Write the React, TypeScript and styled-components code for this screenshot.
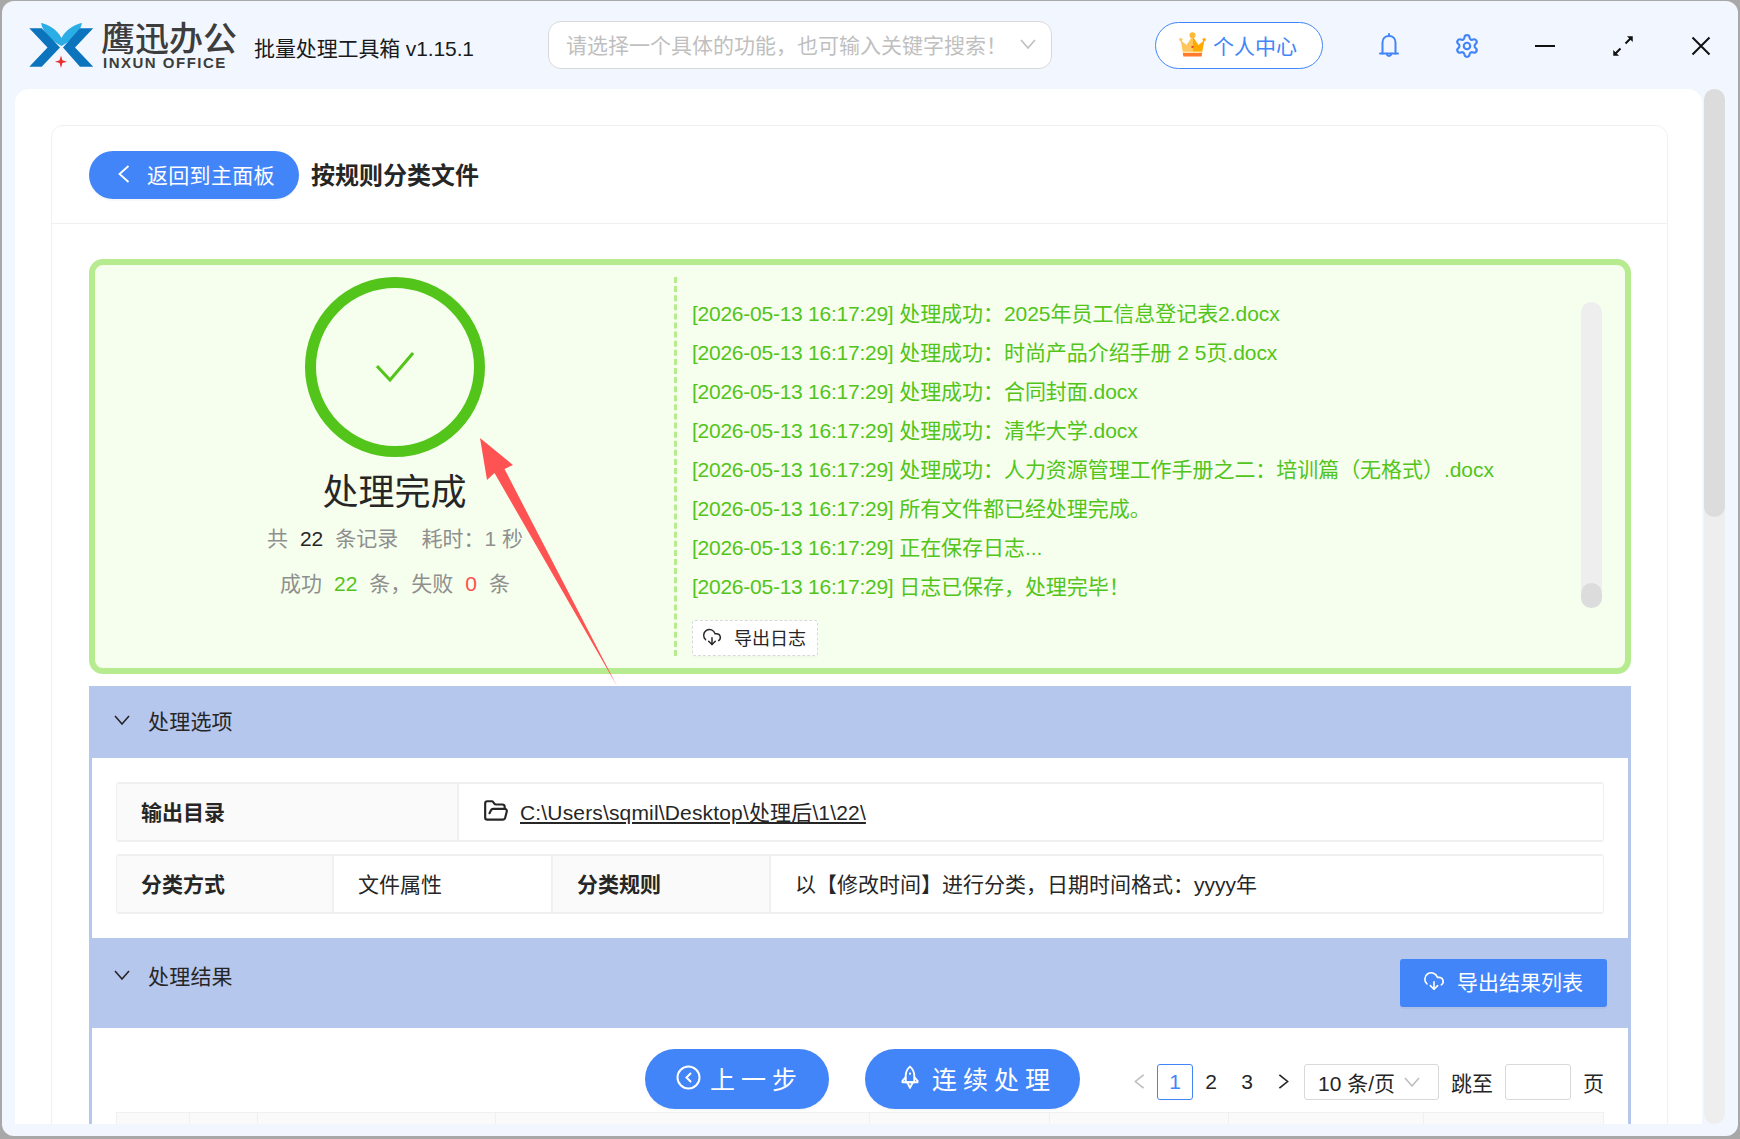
import React from "react";
import styled, { createGlobalStyle } from "styled-components";
import { CloudDownload, FolderOpen, Settings } from "lucide-react";

const BLUE = "#4285f8";
const BAND = "#b6c7ee";
const GREEN = "#52c41a";
const LINE = "#f0f0f0";

const GlobalStyle = createGlobalStyle`
  html, body {
    margin: 0;
    padding: 0;
    overflow: hidden;
  }
  * {
    box-sizing: border-box;
  }
  body {
    font-family: "Liberation Sans", "Noto Sans CJK SC", sans-serif;
    font-size: 21px;
    color: #262626;
  }
`;

const Desktop = styled.div`
  position: relative;
  width: 1740px;
  height: 1139px;
  overflow: hidden;
  background: #a8a8a8;
  padding: 1px 2px 3px 2px;
`;

const Win = styled.div`
  display: flex;
  flex-direction: column;
  height: 100%;
  background: #f2f7ff;
  border-radius: 12px;
  overflow: hidden;
`;

const TitleBar = styled.header`
  display: flex;
  align-items: center;
  flex: none;
  height: 88px;
  padding-left: 27px;
`;

const LogoMark = styled.svg`
  flex: none;
  width: 64px;
  height: 45px;
  margin-top: 1px;
`;

const Brand = styled.div`
  display: flex;
  flex-direction: column;
  flex: none;
  width: 137px;
  margin-left: 8px;
  margin-top: 1px;
`;

const BrandName = styled.div`
  font-size: 34px;
  line-height: 33px;
  font-weight: 500;
  color: #3d3d3d;
  white-space: nowrap;
`;

const BrandLatin = styled.div`
  padding-left: 2px;
  font-size: 15px;
  line-height: 13px;
  font-weight: 700;
  letter-spacing: 1.5px;
  color: #3d3d3d;
  white-space: nowrap;
`;

const AppTitle = styled.div`
  flex: none;
  width: 294px;
  margin-left: 16px;
  margin-top: 3px;
  letter-spacing: -0.12px;
  color: #1a1a1a;
  white-space: nowrap;
`;

const SearchBox = styled.div`
  display: flex;
  align-items: center;
  justify-content: space-between;
  flex: none;
  width: 504px;
  height: 48px;
  padding: 0 15px 3px 17px;
  background: #fff;
  border: 1px solid #d9d9d9;
  border-radius: 13px;
  color: #bfbfbf;
  white-space: nowrap;
`;

const ProfileButton = styled.div`
  display: flex;
  align-items: center;
  flex: none;
  width: 168px;
  height: 47px;
  margin-left: 103px;
  margin-top: 1px;
  padding: 0 0 2px 23px;
  gap: 7px;
  background: #fff;
  border: 1px solid ${BLUE};
  border-radius: 24px;
  color: ${BLUE};
`;

const IconCell = styled.div`
  display: flex;
  align-items: center;
  justify-content: center;
  flex: none;
  width: 78px;
  height: 30px;
  margin-top: 1px;
  color: ${BLUE};
`;

const IconGroup = styled.div`
  display: flex;
  flex: none;
  margin-left: 27px;
`;

const Body = styled.div`
  display: flex;
  flex: 1;
  min-height: 0;
  padding: 0 13px 12px 13px;
  gap: 2px;
`;

const Panel = styled.main`
  flex: 1;
  min-width: 0;
  background: #fff;
  border-radius: 14px 14px 0 0;
  overflow: hidden;
  padding: 36px 34px 0 36px;
`;

const PageScroll = styled.div`
  flex: none;
  width: 21px;
  background: #eeeeee;
  border-radius: 11px;
`;

const PageThumb = styled.div`
  height: 428px;
  background: #dcdcdc;
  border-radius: 11px;
`;

const Card = styled.section`
  border: 1px solid ${LINE};
  border-radius: 12px 12px 0 0;
  height: 1100px;
`;

const CardHead = styled.div`
  display: flex;
  align-items: center;
  height: 98px;
  padding-left: 37px;
  border-bottom: 1px solid ${LINE};
`;

const BackButton = styled.div`
  display: flex;
  align-items: center;
  width: 210px;
  height: 48px;
  padding: 0 0 2px 29px;
  gap: 17px;
  background: ${BLUE};
  border-radius: 24px;
  box-shadow: 0 2px 0 rgba(0, 0, 0, 0.03);
  letter-spacing: 0.3px;
  color: #fff;
`;

const PageTitle = styled.h1`
  margin: 0 0 2px 12px;
  font-size: 24px;
  font-weight: 700;
  color: #262626;
`;

const CardBody = styled.div`
  padding: 35px 36px 0 37px;
`;

const ResultBox = styled.div`
  display: flex;
  height: 415px;
  background: #f6ffed;
  border: 6px solid #b7eb8f;
  border-radius: 14px;
`;

const Summary = styled.div`
  display: flex;
  flex-direction: column;
  align-items: center;
  flex: none;
  width: 579px;
  padding: 12px 0 0 20px;
`;

const Ring = styled.div`
  display: flex;
  align-items: center;
  justify-content: center;
  width: 180px;
  height: 180px;
  border: 11px solid ${GREEN};
  border-radius: 50%;
`;

const DoneTitle = styled.div`
  margin-top: 12px;
  font-size: 36px;
  line-height: 47px;
  color: #262626;
`;

const StatLine = styled.div`
  display: flex;
  height: 45px;
  line-height: 45px;
  margin-left: 1px;
  color: #8f8f8f;
  white-space: pre;
`;

const StatNum = styled.span<{ $color: string }>`
  margin: 0 12px;
  color: ${(p) => p.$color};
`;

const LogColumn = styled.div`
  display: flex;
  flex: 1;
  min-width: 0;
  height: 379px;
  margin-top: 12px;
  padding: 0 23px 0 15px;
  border-left: 3px dashed #b7eb8f;
`;

const LogMain = styled.div`
  flex: 1;
  min-width: 0;
  padding-top: 16.5px;
`;

const LogLine = styled.div`
  height: 39px;
  line-height: 39px;
  letter-spacing: -0.05px;
  color: ${GREEN};
  white-space: nowrap;
`;

const LogStamp = styled.span`
  letter-spacing: -0.25px;
`;

const LogExport = styled.div`
  display: flex;
  align-items: center;
  width: 126px;
  height: 36px;
  margin-top: 14.5px;
  padding: 0 0 2px 9px;
  gap: 12px;
  background: #fff;
  border: 1px dashed #d9d9d9;
  border-radius: 3px;
  box-shadow: 0 2px 0 rgba(0, 0, 0, 0.02);
  font-size: 18px;
  color: #262626;
`;

const LogTrack = styled.div`
  display: flex;
  align-items: flex-end;
  flex: none;
  width: 21px;
  height: 306px;
  margin-top: 25px;
  background: #eeeeee;
  border-radius: 11px;
`;

const LogThumb = styled.div`
  width: 100%;
  height: 25px;
  background: #dcdcdc;
  border-radius: 11px;
`;

const BandHead = styled.div<{ $height: number; $top?: number }>`
  display: flex;
  align-items: center;
  justify-content: space-between;
  height: ${(p) => p.$height}px;
  margin-top: ${(p) => p.$top ?? 0}px;
  padding: 0 24px 0 25px;
  background: ${BAND};
`;

const BandTitle = styled.div<{ $lift?: number }>`
  display: flex;
  align-items: center;
  gap: 18px;
  margin-bottom: ${(p) => p.$lift ?? 4}px;
  letter-spacing: 0.2px;
  color: #262626;
`;

const ExportButton = styled.div`
  display: flex;
  align-items: center;
  width: 207px;
  height: 48px;
  padding: 0 0 4px 23px;
  gap: 12px;
  background: ${BLUE};
  border-radius: 3px;
  box-shadow: 0 2px 0 rgba(0, 0, 0, 0.04);
  color: #fff;
`;

const BandBody = styled.div<{ $pad: string }>`
  padding: ${(p) => p.$pad};
  border-left: 3px solid ${BAND};
  border-right: 3px solid ${BAND};
`;

const InfoRow = styled.div<{ $cols: string; $gap?: number }>`
  display: grid;
  grid-template-columns: ${(p) => p.$cols};
  height: 60px;
  margin-top: ${(p) => p.$gap ?? 0}px;
  border: 2px solid ${LINE};
  border-left-width: 1px;
  border-right-width: 1px;
  border-radius: 3px;
`;

const InfoLabel = styled.div`
  display: flex;
  align-items: center;
  padding: 0 0 2px 24px;
  background: #fafafa;
  border-right: 2px solid ${LINE};
  font-weight: 700;
  color: #262626;
`;

const InfoValue = styled.div<{ $divider?: boolean }>`
  display: flex;
  align-items: center;
  gap: 11px;
  padding: 0 0 2px 24px;
  border-right: ${(p) => (p.$divider ? `2px solid ${LINE}` : "none")};
  color: #262626;
  white-space: nowrap;
`;

const PathLink = styled.span`
  text-decoration: underline;
  letter-spacing: 0.16px;
`;

const Toolbar = styled.div`
  display: flex;
  align-items: center;
  height: 60px;
  padding-left: 529px;
`;

const StepButton = styled.div<{ $width: number; $gap: number; $pad: number; $inner: number }>`
  display: flex;
  align-items: center;
  flex: none;
  width: ${(p) => p.$width}px;
  height: 60px;
  margin-right: ${(p) => p.$gap}px;
  padding: 0 0 3px ${(p) => p.$pad}px;
  gap: ${(p) => p.$inner}px;
  background: ${BLUE};
  border-radius: 30px;
  box-shadow: 0 2px 0 rgba(0, 0, 0, 0.03);
  color: #fff;
  font-size: 25px;
  letter-spacing: 6px;
`;

const Pager = styled.div`
  display: flex;
  align-items: center;
  flex: none;
  margin-top: 5px;
`;

const PageItem = styled.div<{ $active?: boolean; $muted?: boolean }>`
  display: flex;
  align-items: center;
  justify-content: center;
  width: 36px;
  height: 36px;
  border: 1px solid ${(p) => (p.$active ? BLUE : "transparent")};
  border-radius: 3px;
  color: ${(p) => (p.$active ? BLUE : p.$muted ? "#bfbfbf" : "#262626")};
`;

const SizeSelect = styled.div`
  display: flex;
  align-items: center;
  justify-content: space-between;
  width: 135px;
  height: 36px;
  margin-left: 3px;
  padding: 0 18px 0 13px;
  border: 1px solid #d9d9d9;
  border-radius: 3px;
  color: #bfbfbf;
`;

const SizeText = styled.span`
  color: #262626;
  white-space: nowrap;
`;

const JumpLabel = styled.span<{ $left: number }>`
  margin-left: ${(p) => p.$left}px;
  white-space: nowrap;
`;

const JumpInput = styled.div`
  width: 66px;
  height: 36px;
  margin-left: 12px;
  background: #fff;
  border: 1px solid #d9d9d9;
  border-radius: 3px;
`;

const TableHead = styled.div`
  display: grid;
  grid-template-columns: 73px 68px 238px 374px 180px 179px 195px 181px;
  height: 50px;
  margin-top: 3px;
  background: #fafafa;
  border: 1px solid ${LINE};
`;

const TableCell = styled.div`
  border-right: 1px solid ${LINE};

  &:last-child {
    border-right: none;
  }
`;

const Annotation = styled.svg`
  position: absolute;
  left: 470px;
  top: 430px;
  width: 160px;
  height: 260px;
  pointer-events: none;
`;

const Logo = () => (
  <LogoMark viewBox="0 0 64 45">
    <path d="M12 0C18 1 28 6 32.5 15C37 6 47 1 53 0C51 10 42 18 32.5 23C23 18 14 10 12 0Z" fill="#2bade6" />
    <path d="M0.3 5.3H12.7L31 24.5L12.7 43.7H0.3L18.5 24.5Z" fill="#0b74bd" />
    <path d="M64.3 5.3H51L34 24.5L51 43.7H64.3L46 24.5Z" fill="#0b74bd" />
    <path d="M32 32.5L33.4 37.3L38 38.7L33.4 40.1L32 45L30.6 40.1L26 38.7L30.6 37.3Z" fill="#e8312f" />
  </LogoMark>
);

const Crown = () => (
  <svg width="27" height="25" viewBox="0 0 27 25">
    <path d="M1.5 8L7.5 13L13.5 4V21H4Z" fill="#ffc65c" />
    <path d="M25.5 8L19.5 13L13.5 4V21H23Z" fill="#ffaa00" />
    <circle cx="13.5" cy="3.2" r="3" fill="#ffb93a" />
    <circle cx="1.8" cy="7.6" r="1.7" fill="#ffc65c" />
    <circle cx="25.2" cy="7.6" r="1.7" fill="#ffaa00" />
    <rect x="3.8" y="19.5" width="19.4" height="1.6" fill="#ffe2a8" />
    <path d="M3.8 21H23.2L22.6 24.5H4.4Z" fill="#ff7a2a" />
    <rect x="12.5" y="14" width="2" height="1.8" fill="#e0352b" />
  </svg>
);

const BellIcon = () => (
  <svg width="20" height="25" viewBox="0 0 20 25" fill="none" stroke={BLUE} strokeWidth="2" strokeLinecap="round">
    <path d="M10 1V3" />
    <path d="M3.5 20.5V9.5C3.5 5.5 6.3 3 10 3S16.5 5.5 16.5 9.5V20.5" />
    <path d="M1 20.5H19" />
    <path d="M7.8 20.8C8 23.6 12 23.6 12.2 20.8" />
  </svg>
);

const ExpandIcon = () => (
  <svg width="20" height="20" viewBox="0 0 20 20" fill="none" stroke="#111" strokeWidth="2">
    <path d="M1.5 18.5L7.5 12.5M12.5 7.5L18.5 1.5" />
    <path d="M0.5 14.5V19.5H5.5Z" fill="#111" strokeWidth="0.5" />
    <path d="M19.5 5.5V0.5H14.5Z" fill="#111" strokeWidth="0.5" />
  </svg>
);

const CloseIcon = () => (
  <svg width="20" height="20" viewBox="0 0 20 20" fill="none" stroke="#111" strokeWidth="2">
    <path d="M1.5 1.5L18.5 18.5M18.5 1.5L1.5 18.5" />
  </svg>
);

const MinIcon = () => (
  <svg width="20" height="2" viewBox="0 0 20 2">
    <rect width="20" height="2" fill="#111" />
  </svg>
);

// flat open V used by the collapse arrows and select boxes
const DownMark = () => (
  <svg width="16" height="10" viewBox="0 0 16 10" fill="none" stroke="currentColor" strokeWidth="1.6">
    <path d="M1 1L8 9L15 1" />
  </svg>
);

const SideMark = ({ w, h, flip }: { w: number; h: number; flip?: boolean }) => (
  <svg width={w} height={h} viewBox="0 0 12 18" preserveAspectRatio="none" fill="none" stroke="currentColor" strokeWidth="1.8">
    <path d={flip ? "M1.5 1L10.5 9L1.5 17" : "M10.5 1L1.5 9L10.5 17"} />
  </svg>
);

const CircleBack = () => (
  <svg width="25" height="25" viewBox="0 0 25 25" fill="none" stroke="#fff" strokeWidth="2">
    <circle cx="12.5" cy="12.5" r="11" />
    <path d="M14.5 8.5L10.5 12.5L14.5 16.5" strokeLinecap="round" />
  </svg>
);

const RocketIcon = () => (
  <svg width="18" height="25" viewBox="0 0 19 26" fill="none" stroke="#fff" strokeWidth="2" strokeLinejoin="round">
    <path d="M9.5 1.5C6.5 4 5 7 5 11V18H14V11C14 7 12.5 4 9.5 1.5Z" />
    <circle cx="9.5" cy="9" r="1.2" fill="#fff" stroke="none" />
    <path d="M5 12.5L1.5 16.5V18H17.5V16.5L14 12.5" />
    <path d="M6.5 18L9.5 24L12.5 18" />
  </svg>
);

const logs = [
  "处理成功：2025年员工信息登记表2.docx",
  "处理成功：时尚产品介绍手册 2 5页.docx",
  "处理成功：合同封面.docx",
  "处理成功：清华大学.docx",
  "处理成功：人力资源管理工作手册之二：培训篇（无格式）.docx",
  "所有文件都已经处理完成。",
  "正在保存日志...",
  "日志已保存，处理完毕！",
];

const App = () => {
  return (
    <Desktop>
      <GlobalStyle />
      <Win>
        <TitleBar>
          <Logo />
          <Brand>
            <BrandName>鹰迅办公</BrandName>
            <BrandLatin>INXUN OFFICE</BrandLatin>
          </Brand>
          <AppTitle>批量处理工具箱 v1.15.1</AppTitle>
          <SearchBox>
            请选择一个具体的功能，也可输入关键字搜索！
            <DownMark />
          </SearchBox>
          <ProfileButton>
            <Crown />
            个人中心
          </ProfileButton>
          <IconGroup>
            <IconCell>
              <BellIcon />
            </IconCell>
            <IconCell>
              <Settings size={26} strokeWidth={2} />
            </IconCell>
            <IconCell>
              <MinIcon />
            </IconCell>
            <IconCell>
              <ExpandIcon />
            </IconCell>
            <IconCell>
              <CloseIcon />
            </IconCell>
          </IconGroup>
        </TitleBar>
        <Body>
          <Panel>
            <Card>
              <CardHead>
                <BackButton>
                  <SideMark w={12} h={18} />
                  返回到主面板
                </BackButton>
                <PageTitle>按规则分类文件</PageTitle>
              </CardHead>
              <CardBody>
                <ResultBox>
                  <Summary>
                    <Ring>
                      <svg width="38" height="30" viewBox="0 0 38 30" fill="none" stroke={GREEN} strokeWidth="3">
                        <path d="M1 14L14 28L37 1" />
                      </svg>
                    </Ring>
                    <DoneTitle>处理完成</DoneTitle>
                    <StatLine>
                      共<StatNum $color="#262626">22</StatNum>条记录{"    "}耗时：1 秒
                    </StatLine>
                    <StatLine>
                      成功<StatNum $color={GREEN}>22</StatNum>条，失败<StatNum $color="#ff4d4f">0</StatNum>条
                    </StatLine>
                  </Summary>
                  <LogColumn>
                    <LogMain>
                      {logs.map((text) => (
                        <LogLine key={text}>
                          <LogStamp>[2026-05-13 16:17:29]</LogStamp> {text}
                        </LogLine>
                      ))}
                      <LogExport>
                        <CloudDownload size={20} strokeWidth={1.75} />
                        导出日志
                      </LogExport>
                    </LogMain>
                    <LogTrack>
                      <LogThumb />
                    </LogTrack>
                  </LogColumn>
                </ResultBox>

                <BandHead $height={72} $top={12}>
                  <BandTitle>
                    <DownMark />
                    处理选项
                  </BandTitle>
                </BandHead>
                <BandBody $pad="24px 24px 24px 24px">
                  <InfoRow $cols="342px 1fr">
                    <InfoLabel>输出目录</InfoLabel>
                    <InfoValue>
                      <FolderOpen size={26} strokeWidth={2} />
                      <PathLink>C:\Users\sqmil\Desktop\处理后\1\22\</PathLink>
                    </InfoValue>
                  </InfoRow>
                  <InfoRow $cols="217px 219px 218px 1fr" $gap={12}>
                    <InfoLabel>分类方式</InfoLabel>
                    <InfoValue $divider>文件属性</InfoValue>
                    <InfoLabel>分类规则</InfoLabel>
                    <InfoValue>以【修改时间】进行分类，日期时间格式：yyyy年</InfoValue>
                  </InfoRow>
                </BandBody>

                <BandHead $height={90}>
                  <BandTitle $lift={17}>
                    <DownMark />
                    处理结果
                  </BandTitle>
                  <ExportButton>
                    <CloudDownload size={22} strokeWidth={1.75} />
                    导出结果列表
                  </ExportButton>
                </BandHead>
                <BandBody $pad="21px 24px 0 24px">
                  <Toolbar>
                    <StepButton $width={184} $gap={36} $pad={31} $inner={9}>
                      <CircleBack />
                      上一步
                    </StepButton>
                    <StepButton $width={215} $gap={41} $pad={36} $inner={13}>
                      <RocketIcon />
                      连续处理
                    </StepButton>
                    <Pager>
                      <PageItem $muted>
                        <SideMark w={11} h={15} />
                      </PageItem>
                      <PageItem $active>1</PageItem>
                      <PageItem>2</PageItem>
                      <PageItem>3</PageItem>
                      <PageItem>
                        <SideMark w={11} h={15} flip />
                      </PageItem>
                      <SizeSelect>
                        <SizeText>10 条/页</SizeText>
                        <DownMark />
                      </SizeSelect>
                      <JumpLabel $left={12}>跳至</JumpLabel>
                      <JumpInput />
                      <JumpLabel $left={12}>页</JumpLabel>
                    </Pager>
                  </Toolbar>
                  <TableHead>
                    {Array.from({ length: 8 }, (_, i) => (
                      <TableCell key={i} />
                    ))}
                  </TableHead>
                </BandBody>
              </CardBody>
            </Card>
          </Panel>
          <PageScroll>
            <PageThumb />
          </PageScroll>
        </Body>
      </Win>
      <Annotation viewBox="470 430 160 260">
        <path d="M480 438L513 465L504.5 469L617 686L494.5 473L487 480Z" fill="#ff5252" />
      </Annotation>
    </Desktop>
  );
};

export default App;
